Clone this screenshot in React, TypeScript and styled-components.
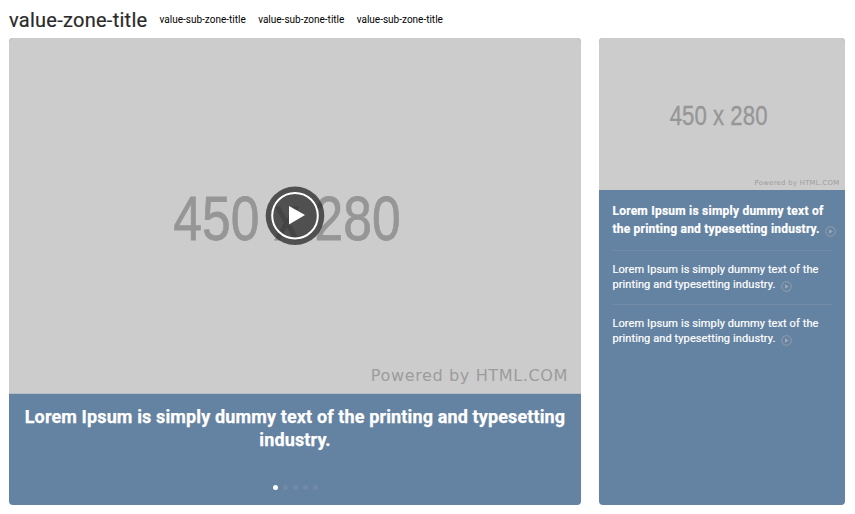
import React from "react";
import styled, { createGlobalStyle } from "styled-components";

const GlobalStyle = createGlobalStyle`
  * { box-sizing: border-box; }
  body { margin: 0; background: #fff; font-family: Roboto, sans-serif; }
`;

const Zone = styled.section`
  width: 855px;
  height: 514px;
  padding: 0 9.6px 9px 9px;
  display: flex;
  flex-direction: column;
`;

const Header = styled.header`
  height: 38px;
  flex: none;
  display: flex;
  align-items: center;
  padding-top: 2px;
`;

const Title = styled.h2`
  margin: 0 12.6px 0 0;
  font-size: 20px;
  line-height: 24px;
  font-weight: 400;
  letter-spacing: 0.26px;
  color: #2a2a2a;
  -webkit-text-stroke: 0.2px #2a2a2a;
  width: 138px;
  white-space: nowrap;
`;

const SubTitles = styled.nav`
  display: flex;
  gap: 12.4px;
`;

const SubTitle = styled.a`
  font-size: 10px;
  line-height: 14px;
  color: #000;
  white-space: nowrap;
`;

const Cards = styled.div`
  flex: 1;
  display: grid;
  grid-template-columns: 572px 246px;
  justify-content: space-between;
`;

const Card = styled.article`
  background: #6482a1;
  border-radius: 4px;
  overflow: hidden;
  display: flex;
  flex-direction: column;
`;

const Media = styled.div<{ $height: number }>`
  position: relative;
  flex: none;
  height: ${(p) => p.$height}px;
`;

const Picture = styled.svg`
  display: block;
  width: 100%;
  height: 100%;
`;

const PlayButton = styled.svg`
  position: absolute;
  left: 256px;
  top: 148px;
  width: 60px;
  height: 60px;
`;

const Caption = styled.h3`
  margin: 11px 10px 0;
  font-size: 18px;
  line-height: 23px;
  font-weight: 700;
  letter-spacing: 0.13px;
  -webkit-text-stroke: 0.25px #fff;
  color: #fff;
  text-align: center;
`;

const Dots = styled.div`
  display: flex;
  justify-content: center;
  gap: 5px;
  margin-top: auto;
  padding-bottom: 15px;
`;

const Dot = styled.i<{ $active?: boolean }>`
  width: 5px;
  height: 5px;
  border-radius: 50%;
  background: ${(p) => (p.$active ? "#fff" : "#718ba7")};
`;

const List = styled.div`
  padding: 12px 13px 0;
`;

const Item = styled.div<{ $lead?: boolean }>`
  font-size: ${(p) => (p.$lead ? 12 : 11)}px;
  line-height: ${(p) => (p.$lead ? 18 : 15)}px;
  font-weight: ${(p) => (p.$lead ? 700 : 400)};
  letter-spacing: ${(p) => (p.$lead ? 0.23 : 0.1)}px;
  -webkit-text-stroke: ${(p) => (p.$lead ? 0.2 : 0.2)}px #fff;
  color: #fff;
  white-space: nowrap;
  padding-bottom: 12px;
  & + & {
    border-top: 1px solid #718ba6;
    padding-top: 11px;
  }
`;

const Line = styled.div`
  display: flex;
`;

const MiniPlay = styled.svg<{ $top: number }>`
  width: 11px;
  height: 11px;
  margin: ${(p) => p.$top}px 0 0 5px;
  flex: none;
`;

function Placeholder() {
  return (
    <Picture viewBox="0 0 450 280" preserveAspectRatio="none">
      <rect width="450" height="280" fill="#ccc" />
      <text
        transform="translate(129.2 159.2) scale(.82 1)"
        fontFamily="Liberation Sans, sans-serif"
        fontSize="49.5"
        fill="#969696"
        stroke="#969696"
        strokeWidth=".6"
        textLength="218.3"
        lengthAdjust="spacing"
      >
        450 x 280
      </text>
      <text
        x="284.6"
        y="269.8"
        fontFamily="DejaVu Sans, sans-serif"
        fontSize="12.7"
        fill="#9c9c9c"
        textLength="154.8"
        lengthAdjust="spacing"
      >
        Powered by HTML.COM
      </text>
    </Picture>
  );
}

const items = [
  { lines: ["Lorem Ipsum is simply dummy text of", "the printing and typesetting industry."], lead: true },
  { lines: ["Lorem Ipsum is simply dummy text of the", "printing and typesetting industry."] },
  { lines: ["Lorem Ipsum is simply dummy text of the", "printing and typesetting industry."] },
];

export default function App() {
  return (
    <>
      <GlobalStyle />
      <Zone>
        <Header>
          <Title>value-zone-title</Title>
          <SubTitles>
            {[0, 1, 2].map((n) => (
              <SubTitle key={n}>value-sub-zone-title</SubTitle>
            ))}
          </SubTitles>
        </Header>
        <Cards>
          <Card>
            <Media $height={355.8}>
              <Placeholder />
              <PlayButton viewBox="0 0 60 60">
                <circle cx="30" cy="29.7" r="29.3" fill="#2d2d2d" fillOpacity=".78" />
                <circle cx="30" cy="29.7" r="22.8" fill="none" stroke="#fff" strokeWidth="2" />
                <path d="M24 20 40 29 24 38.5Z" fill="#fff" />
              </PlayButton>
            </Media>
            <Caption>Lorem Ipsum is simply dummy text of the printing and typesetting industry.</Caption>
            <Dots>
              {[0, 1, 2, 3, 4].map((n) => (
                <Dot key={n} $active={n === 0} />
              ))}
            </Dots>
          </Card>
          <Card>
            <Media $height={152.3}>
              <Placeholder />
            </Media>
            <List>
              {items.map((item, n) => (
                <Item key={n} $lead={item.lead}>
                  <Line>{item.lines[0]}</Line>
                  <Line>
                    {item.lines[1]}
                    <MiniPlay $top={item.lead ? 6 : 4} viewBox="0 0 11 11">
                      <circle cx="5.5" cy="5.5" r="4.8" fill="none" stroke="#94a0ad" strokeWidth="1" />
                      <path d="M4 3.2 7.8 5.5 4 7.8Z" fill="#a0a9b3" />
                    </MiniPlay>
                  </Line>
                </Item>
              ))}
            </List>
          </Card>
        </Cards>
      </Zone>
    </>
  );
}
